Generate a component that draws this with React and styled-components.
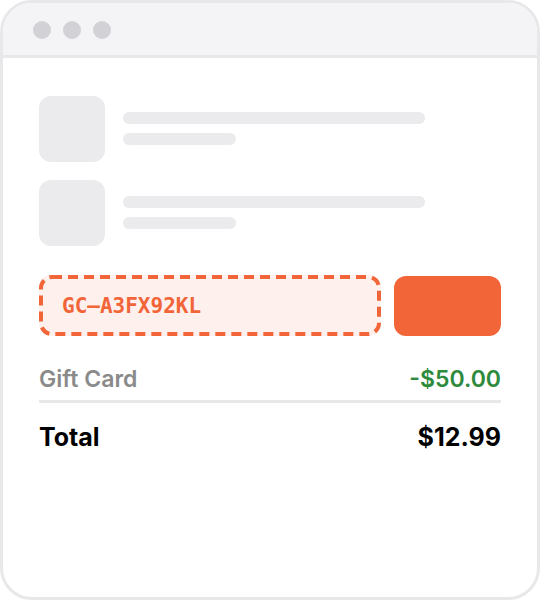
import styled, { createGlobalStyle } from "styled-components";

const Global = createGlobalStyle`
  html, body { margin: 0; padding: 0; background: #ffffff; }
  body { font-family: Inter, "Noto Sans", sans-serif; }
`;

const Frame = styled.div`
  box-sizing: border-box;
  width: 540px;
  height: 600px;
  border: 3px solid #e8e8ea;
  border-radius: 32px;
  overflow: hidden;
  background: #ffffff;
  display: flex;
  flex-direction: column;
`;

const TitleBar = styled.div`
  height: 55px;
  flex-shrink: 0;
  background: #f4f4f6;
  border-bottom: 3px solid #e8e8ea;
  display: flex;
  align-items: flex-start;
  gap: 12px;
  padding: 18px 0 0 30px;
  box-sizing: border-box;
`;

const Dot = styled.span`
  width: 18px;
  height: 18px;
  border-radius: 50%;
  background: #d1d1d6;
`;

const Body = styled.div`
  padding: 38px 36px 0 36px;
  display: flex;
  flex-direction: column;
`;

const Item = styled.div`
  display: flex;
  align-items: flex-start;
  gap: 18px;
  margin-bottom: 18px;
`;

const Thumb = styled.div`
  width: 66px;
  height: 66px;
  border-radius: 12px;
  background: #ebebed;
  flex-shrink: 0;
`;

const Lines = styled.div`
  display: flex;
  flex-direction: column;
  gap: 9px;
  padding-top: 16px;
`;

const Line = styled.div`
  height: 12px;
  width: ${(p) => p.w}px;
  border-radius: 6px;
  background: #ebebed;
`;

const CodeRow = styled.div`
  display: flex;
  gap: 13px;
  margin-top: 11px;
`;

const CodeBox = styled.div`
  position: relative;
  box-sizing: border-box;
  width: 342px;
  height: 61px;
  border-radius: 12px;
  background: #fef0ec;
  display: flex;
  align-items: center;
  padding-left: 23px;
  padding-top: 1px;
  font-family: "DejaVu Sans Mono", "Liberation Mono", monospace;
  font-weight: bold;
  font-size: 21px;
  color: #f26538;
`;

const DashBorder = styled.svg`
  position: absolute;
  inset: 0;
  width: 100%;
  height: 100%;
  overflow: visible;
  pointer-events: none;
`;

const ApplyButton = styled.div`
  width: 107px;
  height: 60px;
  margin-top: 1px;
  border-radius: 12px;
  background: #f26538;
`;

const Row = styled.div`
  display: flex;
  justify-content: space-between;
  align-items: center;
  font-size: ${(p) => p.size}px;
  line-height: ${(p) => p.lh}px;
  font-weight: ${(p) => p.weight};
  color: ${(p) => p.color};
`;

const Amount = styled.span`
  color: ${(p) => p.color};
`;

const Spacer = styled.div`
  height: 29px;
`;

const Divider = styled.div`
  height: 3px;
  background: #e8e8ea;
  margin: 7px 0 19px;
`;

export default function App() {
  return (
    <>
      <Global />
      <Frame>
        <TitleBar>
          <Dot />
          <Dot />
          <Dot />
        </TitleBar>
        <Body>
          <Item>
            <Thumb />
            <Lines>
              <Line w={302} />
              <Line w={113} />
            </Lines>
          </Item>
          <Item>
            <Thumb />
            <Lines>
              <Line w={302} />
              <Line w={113} />
            </Lines>
          </Item>
          <CodeRow>
            <CodeBox>
              <DashBorder>
                <rect
                  x="2"
                  y="2"
                  width="338"
                  height="57"
                  rx="11"
                  fill="none"
                  stroke="#f26538"
                  strokeWidth="4"
                  strokeDasharray="10 6"
                />
              </DashBorder>
              GC–A3FX92KL
            </CodeBox>
            <ApplyButton />
          </CodeRow>
          <Spacer />
          <Row size={23} lh={28} weight={600} color="#8a8a8a">
            <span>Gift Card</span>
            <Amount color="#2e8a3c">-$50.00</Amount>
          </Row>
          <Divider />
          <Row size={25} lh={30} weight={700} color="#000000">
            <span>Total</span>
            <span>$12.99</span>
          </Row>
        </Body>
      </Frame>
    </>
  );
}
